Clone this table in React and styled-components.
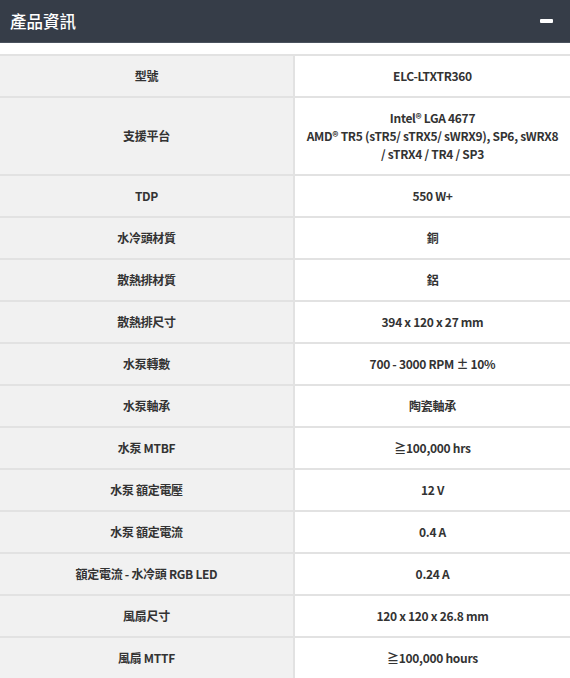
import React from "react"
import styled, { createGlobalStyle } from "styled-components"

const GlobalStyle = createGlobalStyle`
  body {
    margin: 0;
    background: #ffffff;
    font-family: "Noto Sans CJK TC", "Noto Sans", sans-serif;
    color: #333333;
  }
`

const specs = [
  { label: "型號", value: ["ELC-LTXTR360"] },
  {
    label: "支援平台",
    value: [
      "Intel® LGA 4677",
      "AMD® TR5 (sTR5/ sTRX5/ sWRX9), SP6, sWRX8",
      "/ sTRX4 / TR4 / SP3",
    ],
  },
  { label: "TDP", value: ["550 W+"] },
  { label: "水冷頭材質", value: ["銅"] },
  { label: "散熱排材質", value: ["鋁"] },
  { label: "散熱排尺寸", value: ["394 x 120 x 27 mm"] },
  { label: "水泵轉數", value: ["700 - 3000 RPM ± 10%"] },
  { label: "水泵軸承", value: ["陶瓷軸承"] },
  { label: "水泵 MTBF", value: ["≧100,000 hrs"] },
  { label: "水泵 額定電壓", value: ["12 V"] },
  { label: "水泵 額定電流", value: ["0.4 A"] },
  { label: "額定電流 - 水冷頭 RGB LED", value: ["0.24 A"] },
  { label: "風扇尺寸", value: ["120 x 120 x 26.8 mm"] },
  { label: "風扇 MTTF", value: ["≧100,000 hours"] },
]

const Header = styled.div`
  display: flex;
  align-items: center;
  justify-content: space-between;
  height: 42px;
  padding: 0 17px 0 10px;
  background: #363d48;
  border-bottom: 1px solid #4a525e;
`

const Title = styled.h2`
  margin: 0;
  font-size: 16.5px;
  font-weight: 500;
  color: #ffffff;
`

const Collapse = styled.span`
  display: block;
  width: 13px;
  height: 4px;
  border-radius: 1px;
  background: #ffffff;
`

const Table = styled.div`
  margin-top: 11px;
  display: grid;
  grid-template-columns: 295px 1fr;
  border-top: 2px solid #e2e2e2;
`

const Cell = styled.div`
  display: flex;
  flex-direction: column;
  align-items: center;
  justify-content: center;
  padding: 11px 4px;
  font-size: 12px;
  font-weight: 700;
  line-height: 18px;
  letter-spacing: -0.3px;
  text-align: center;
  white-space: nowrap;
  border-bottom: 2px solid #e2e2e2;
  background: ${(p) => (p.$label ? "#f1f1f1" : "#ffffff")};
  border-right: ${(p) => (p.$label ? "2px solid #e2e2e2" : "none")};
`

const Line = styled.span`
  display: block;
`

const App = () => {
  return (
    <>
      <GlobalStyle />
      <Header>
        <Title>產品資訊</Title>
        <Collapse />
      </Header>
      <Table>
        {specs.map((item, index) => (
          <React.Fragment key={index}>
            <Cell $label>{item.label}</Cell>
            <Cell>
              {item.value.map((line, i) => (
                <Line key={i}>{line}</Line>
              ))}
            </Cell>
          </React.Fragment>
        ))}
      </Table>
    </>
  )
}

export default App
